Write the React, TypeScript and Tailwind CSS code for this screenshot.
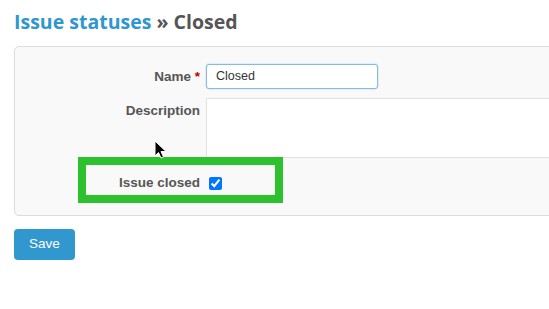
import React from "react";

export default function App() {
  return (
    <div className="relative w-[549px] h-[309px] overflow-hidden bg-white px-[14px] pt-[8px]" style={{ fontFamily: '"Liberation Sans", Arial, sans-serif' }}>
      <h2 className="text-[19.5px] leading-[28px] font-bold text-[#555]" style={{ fontFamily: '"Open Sans", "Noto Sans", sans-serif' }}>
        <span className="text-[#2e97cf]">Issue statuses</span> » Closed
      </h2>
      <div className="mt-[10px] w-[560px] h-[170px] border border-[#dcdcdc] rounded-[5px] bg-[#f9f9f9] pt-[17px]">
        <div className="flex items-center">
          <div className="w-[191px] text-right text-[13.5px] font-bold text-[#555] pr-[6px] pt-[1px]">
            Name <span className="text-[#bb0000]">*</span>
          </div>
          <div className="w-[172px] h-[25px] border border-[#86badf] rounded-[3px] bg-white shadow-[0_0_2px_#a9d0ee] flex items-center px-[9px] text-[12.5px] text-[#333]">
            Closed
          </div>
        </div>
        <div className="flex mt-[9px]">
          <div className="w-[191px] text-right text-[13.5px] font-bold text-[#555] pr-[6px] pt-[3px]">Description</div>
          <div className="flex-1 h-[60px] border border-[#e2e2e2] bg-white"></div>
        </div>
        <div className="flex items-center mt-[15px]">
          <div className="w-[191px] text-right text-[13.5px] font-bold text-[#555] pr-[6px]">Issue closed</div>
          <input type="checkbox" checked readOnly className="ml-[3px] w-[13px] h-[13px]" />
        </div>
      </div>
      <button className="mt-[13px] w-[61px] h-[31px] rounded-[4px] bg-[#3097cf] text-white text-[13.5px]">Save</button>

      <div className="absolute left-[78px] top-[157px] w-[205px] h-[46px] border-[8px] border-[#2ec12e]"></div>
      <svg className="absolute left-[154px] top-[140px]" width="14" height="20" viewBox="0 0 14 20">
        <path d="M1 1 L1 16 L4.5 12.5 L7 18 L9.5 17 L7 11.5 L12 11.5 Z" fill="#000" stroke="#fff" strokeWidth="1" />
      </svg>
    </div>
  );
}
